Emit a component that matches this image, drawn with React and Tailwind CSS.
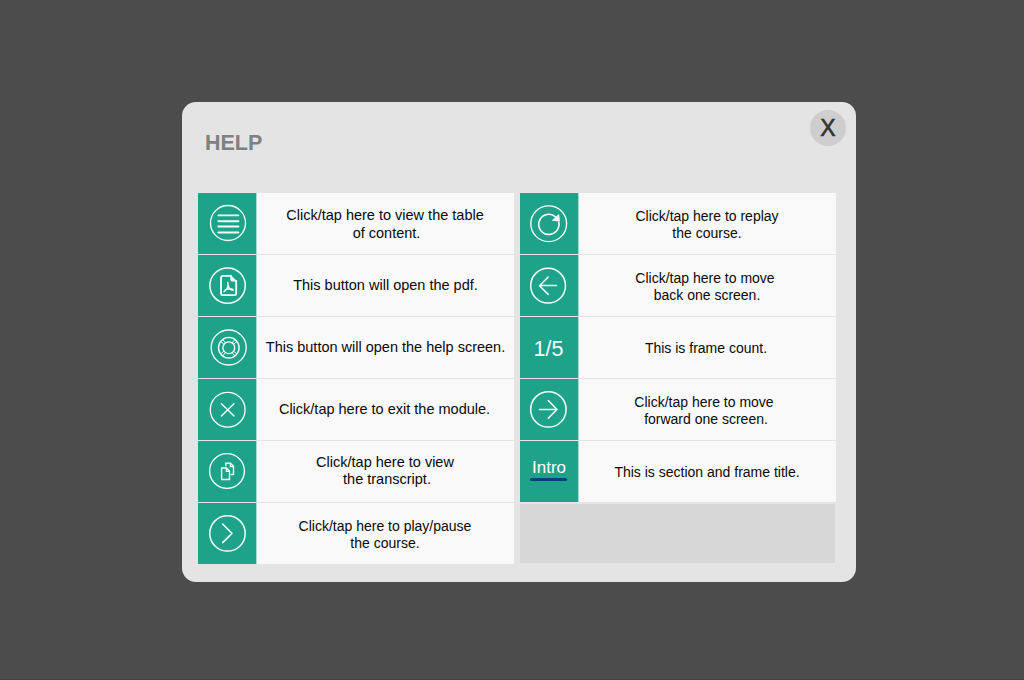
function Icon({ children }) {
  return (
    <svg
      width="58"
      height="61"
      viewBox="0 0 58 61"
      fill="none"
      stroke="#f2fffb"
      strokeWidth="1.35"
      strokeLinecap="round"
      strokeLinejoin="round"
    >
      {children}
    </svg>
  );
}

const MenuIcon = () => (
  <Icon>
    <circle cx="30" cy="30" r="17.5" />
    <path d="M20.4 22.4H40.4M20.4 28.2H40.4M20.4 33.5H40.4M20.4 39.5H40.4" strokeWidth="1.9" />
  </Icon>
);

const PdfIcon = () => (
  <Icon>
    <circle cx="29.6" cy="30.6" r="17.7" strokeWidth="1.5" />
    <path d="M33 20.8H25a2 2 0 0 0-2 2V38.2a2 2 0 0 0 2 2H36.2a2 2 0 0 0 2-2V26" strokeWidth="1.8" />
    <path d="M32.6 20.3L38.7 26.2H34.1a1.5 1.5 0 0 1-1.5-1.5Z" fill="#f2fffb" strokeWidth="0.6" />
    <path d="M29.8 27.4C30.8 31 28.800 34.800 26 36.600M30 30.500C30.800 33 32.400 34.800 35 35.200M27.200 35C29.500 33.900 32.500 33.500 35 34.400" strokeWidth="1.500" />
  </Icon>
);

const HelpIcon = () => (
  <Icon>
    <circle cx="30.7" cy="30.5" r="17.5" />
    <circle cx="30.8" cy="30.7" r="10.3" />
    <circle cx="30.8" cy="30.7" r="5.9" />
    <path d="M22.9 24.6L26 27.3M24.8 22.8L27.5 25.7M38.7 24.6L35.6 27.3M36.8 22.8L34.1 25.7M22.9 36.8L26 34.1M24.8 38.6L27.5 35.7M38.7 36.8L35.6 34.1M36.8 38.6L34.1 35.7" strokeWidth="1" />
  </Icon>
);

const CloseIcon = () => (
  <Icon>
    <circle cx="29.7" cy="30.7" r="17.4" />
    <path d="M23.4 24.7L36 37M36 24.7L23.4 37" />
  </Icon>
);

const TranscriptIcon = () => (
  <Icon>
    <circle cx="29" cy="30" r="17.4" />
    <path d="M23.6 27H28.6L31.5 30V38.5H23.6ZM28.4 27V30.2H31.5" strokeWidth="1.4" strokeLinejoin="miter" />
    <path d="M27.8 24.8V22.3H32.6L35.5 25.3V33.5H33.4M32.4 22.3V25.5H35.5" strokeWidth="1.4" strokeLinejoin="miter" />
  </Icon>
);

const PlayIcon = () => (
  <Icon>
    <circle cx="29.5" cy="30.4" r="17.7" strokeWidth="1.5" />
    <path d="M24.6 21L34 30.4L24.6 39.6" strokeWidth="1.5" />
  </Icon>
);

const ReplayIcon = () => (
  <Icon>
    <circle cx="28.7" cy="30.7" r="17.9" />
    <path d="M38.8 29.5A10.1 10.1 0 1 1 35.6 23.8" strokeWidth="1.6" />
    <path d="M32.8 27.3L39.4 28.2L38.8 21.9Z" fill="#f2fffb" strokeWidth="0.9" />
  </Icon>
);

const BackIcon = () => (
  <Icon>
    <circle cx="28.1" cy="30.7" r="17.4" strokeWidth="1.5" />
    <path d="M36.5 30.6H19.5M28.2 22L19.5 30.7L28.2 39.4" strokeWidth="1.5" />
  </Icon>
);

const ForwardIcon = () => (
  <Icon>
    <circle cx="28.4" cy="30.4" r="17.7" strokeWidth="1.5" />
    <path d="M19.5 30.6H37M28.3 21.6L37 30.5L28.3 39.3" strokeWidth="1.5" />
  </Icon>
);

const FrameCount = () => (
  <span className="pr-px pt-[2px] text-[21.5px] leading-6 text-white">1/5</span>
);

const SectionTitle = () => (
  <div className="flex flex-col items-center pb-[5px] pr-px">
    <span className="pl-px text-[17px] leading-5 text-white">Intro</span>
    <span className="h-[3px] w-[37px] rounded-sm bg-[#06407f]" />
  </div>
);

const single = "text-[14.5px] leading-[18px] pb-[2px]";
const double = "text-[14.5px] leading-[18px]";
const small = "text-[14px] leading-[17px] pt-[2px]";

const leftRows = [
  { icon: MenuIcon, text: double, lines: [["Click/tap here to view the table", "pr-[1px]"], ["of content.", "pl-[2px]"]] },
  { icon: PdfIcon, text: single, lines: [["This button will open the pdf.", ""]] },
  { icon: HelpIcon, text: single, lines: [["This button will open the help screen.", ""]] },
  { icon: CloseIcon, text: single, lines: [["Click/tap here to exit the module.", "pr-[2px]"]] },
  { icon: TranscriptIcon, text: "text-[14.5px] leading-[17.5px] pb-[1px]", lines: [["Click/tap here to view", "pr-[1px]"], ["the transcript.", "pl-[3px]"]] },
  { icon: PlayIcon, text: small, lines: [["Click/tap here to play/pause", "pr-[1px]"], ["the course.", "pr-[1px]"]] },
];

const rightRows = [
  { icon: ReplayIcon, text: small, lines: [["Click/tap here to replay", "pr-[1px]"], ["the course.", "pr-[1px]"]] },
  { icon: BackIcon, text: small, lines: [["Click/tap here to move", "pr-[5px]"], ["back one screen.", "pr-[1px]"]] },
  { icon: FrameCount, text: small, lines: [["This is frame count.", "pr-[3px]"]] },
  { icon: ForwardIcon, text: small, lines: [["Click/tap here to move", "pr-[7px]"], ["forward one screen.", "pr-[3px]"]] },
  { icon: SectionTitle, text: small, lines: [["This is section and frame title.", "pr-[1px]"]] },
];

function Row({ icon: Glyph, text, lines }) {
  return (
    <div className="flex h-[61px]">
      <div className="flex w-[58px] shrink-0 items-center justify-center bg-[#1ea28a]">
        <Glyph />
      </div>
      <div className="flex flex-1 items-center justify-center border-l border-[#a5dbd1] bg-[#f9f9f9]">
        <p className={`whitespace-nowrap text-center text-[#0a0a0a] ${text}`}>
          {lines.map(([line, nudge]) => (
            <span key={line} className={`block ${nudge}`}>{line}</span>
          ))}
        </p>
      </div>
    </div>
  );
}

export default function App() {
  return (
    <main className="h-[680px] w-[1024px] overflow-hidden border-b border-[#453f43] bg-[#4c4c4c] pl-[182px] pt-[102px] font-['Liberation_Sans',Arial,sans-serif]">
      <section className="h-[480px] w-[674px] rounded-[14px] bg-[#e4e4e4] pl-4">
        <header className="flex h-[91px] justify-between pl-[7px] pr-[10px] pt-2">
          <h1 className="pt-[21px] text-[21.5px] font-bold leading-6 text-[#808080]">HELP</h1>
          <button
            aria-label="Close"
            className="flex size-9 items-center justify-center rounded-full bg-[#cecece] text-[23px] leading-none text-[#333] [-webkit-text-stroke:0.6px_#333]"
          >
            X
          </button>
        </header>
        <div className="flex items-start gap-[6px]">
          <div className="flex w-[316px] flex-col gap-px">
            {leftRows.map((row, i) => <Row key={i} {...row} />)}
          </div>
          <div className="flex w-[316px] flex-col gap-px">
            {rightRows.map((row, i) => <Row key={i} {...row} />)}
            <div className="mt-px h-[59px] w-[315px] bg-[#d7d7d7]" />
          </div>
        </div>
      </section>
    </main>
  );
}
